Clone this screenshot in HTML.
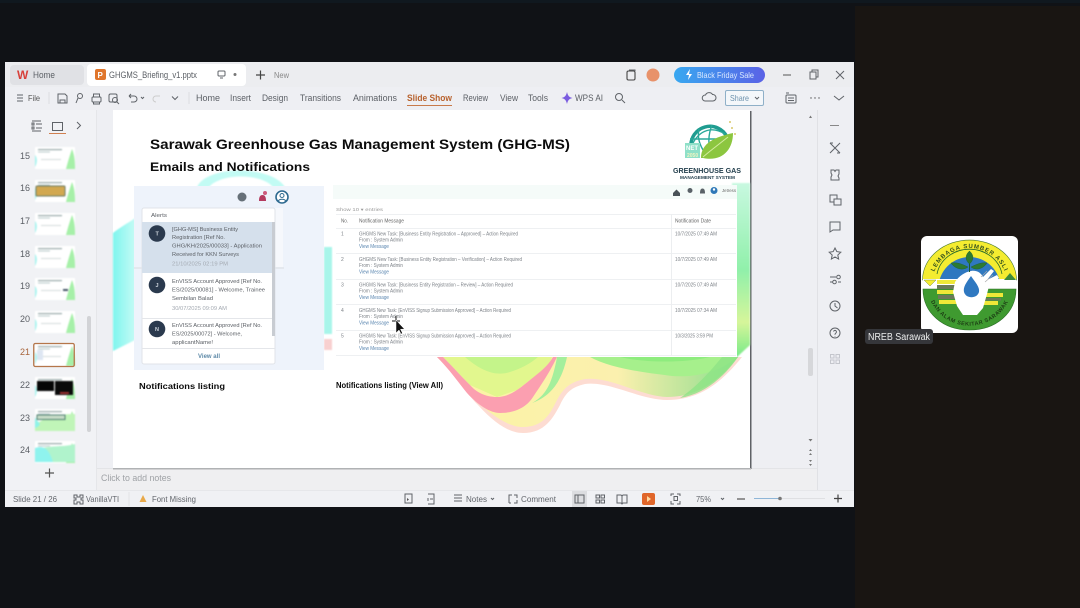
<!DOCTYPE html>
<html><head><meta charset="utf-8"><title>GHGMS Briefing</title>
<style>
html,body{margin:0;padding:0;background:#111418;width:1080px;height:608px;overflow:hidden}
svg{display:block;filter:blur(.3px)}
text{font-family:"Liberation Sans",Arial,sans-serif}
.m{font-size:9px;fill:#5c6066}
.b{filter:blur(.35px)}
.b2{filter:blur(.7px)}
.t{font-size:5px;fill:#7d8288}
.l{fill:#5a86b0}
.i{fill:none;stroke:#5f6368;stroke-width:1}
.a{font-size:5.8px;fill:#5c6066}
</style></head><body>
<svg width="1080" height="608" viewBox="0 0 1080 608" xmlns="http://www.w3.org/2000/svg">
<defs>
<linearGradient id="pill" x1="0" x2="1" y1="0" y2="0"><stop offset="0" stop-color="#38a8f0"/><stop offset="1" stop-color="#5a62e6"/></linearGradient>
<linearGradient id="cy" x1="0" x2="1" y1="0" y2="0"><stop offset="0" stop-color="#7ff5ee"/><stop offset="1" stop-color="#c4fbf5"/></linearGradient>
<linearGradient id="rg" x1="0" x2="0" y1="0" y2="1"><stop offset="0" stop-color="#c8f8e0"/><stop offset=".5" stop-color="#90f0aa"/><stop offset=".8" stop-color="#d6f59a"/><stop offset="1" stop-color="#78ea88"/></linearGradient>
<linearGradient id="sw" x1="0" x2="1" y1="0" y2="0"><stop offset="0" stop-color="#fbf4a4"/><stop offset=".6" stop-color="#fbf0ae"/><stop offset=".85" stop-color="#b8e49a"/><stop offset="1" stop-color="#7fe98a"/></linearGradient>
<symbol id="th" viewBox="0 0 40 22" width="40" height="22"><rect width="40" height="22" fill="#fff"/><path d="M31 22C33 14 35 8 37 2C39 7 40 12 40 22Z" fill="#a6f0a8"/><path d="M0 8C3 11 2 17 0 20Z" fill="#a8f5ef"/><rect x="3" y="2" width="24" height="1.200" fill="#9aa"/><rect x="3" y="4.500" width="12" height="1" fill="#bcc"/><rect x="6" y="12" width="20" height="1" fill="#d4dbdb"/></symbol>
<path id="top" d="M10.500 50A38 38 0 0 1 86.500 50" fill="none"/>
<path id="bot" d="M5.500 46.700A43 43 0 0 0 91.500 46.700" fill="none"/>
<clipPath id="bl"><rect x="0" y="0" width="97" height="43"/></clipPath>
</defs>

<rect width="1080" height="608" fill="#101216"/>
<rect x="855" y="6" width="225" height="602" fill="#191512"/>
<rect x="0" y="0" width="1080" height="3" fill="#10181f"/>

<!-- window -->
<rect x="5" y="62" width="849" height="445" fill="#eeeff3"/>
<rect x="5" y="62" width="849" height="25" fill="#ecedf0"/>
<rect x="10" y="65" width="74" height="20" rx="4" fill="#e0e1e5"/>
<rect x="87" y="64" width="159" height="22" rx="4" fill="#fff"/>
<text x="17" y="79" font-size="12" font-weight="bold" fill="#d8403a">W</text>
<text x="33" y="78" class="m" textLength="22" lengthAdjust="spacingAndGlyphs">Home</text>
<rect x="95" y="69" width="11" height="11" rx="2" fill="#e0762c"/>
<text x="97.500" y="78" font-size="8" font-weight="bold" fill="#fff">P</text>
<text x="109" y="78" class="m" textLength="88" lengthAdjust="spacingAndGlyphs">GHGMS_Briefing_v1.pptx</text>
<rect x="218" y="71" width="7" height="5" rx="1" class="i"/><path d="M220 78h3" class="i"/>
<circle cx="235" cy="74.500" r="1.500" fill="#777"/>
<path d="M256 75h9M260.500 70.500v9" stroke="#444" stroke-width="1.200"/>
<text x="274" y="78" font-size="8" fill="#888" textLength="15" lengthAdjust="spacingAndGlyphs">New</text>
<rect x="627" y="71" width="8" height="9" rx="1.500" fill="none" stroke="#444" stroke-width="1.100"/><path d="M629 70h6v1" class="i"/>
<circle cx="653" cy="75" r="6.500" fill="#e8926a"/>
<rect x="674" y="67" width="91" height="16" rx="8" fill="url(#pill)"/>
<path d="M690 69l-4 6h3l-1 5 4-6h-3z" fill="#fff"/>
<text x="697" y="78" font-size="8.500" fill="#dbe9ff" textLength="57" lengthAdjust="spacingAndGlyphs">Black Friday Sale</text>
<path d="M783 75h8" stroke="#555"/><rect x="810" y="72" width="6" height="7" class="i"/><path d="M812 72v-2h6v7h-2" class="i"/><path d="M836 71l8 8M844 71l-8 8" class="i"/>

<!-- menu -->
<path d="M17 95h6M17 98h6M17 101h6" class="i"/>
<text x="28" y="101" font-size="8.500" fill="#555" textLength="12" lengthAdjust="spacingAndGlyphs">File</text>
<path d="M49 92v12" stroke="#dcdde0"/>
<path d="M58 94h7l2 2v7h-9zM60 103v-3h5v3" class="i"/>
<circle cx="80" cy="96" r="2.500" class="i"/><path d="M78 98l-2 5" class="i"/>
<rect x="92" y="97" width="9" height="5" rx="1" class="i"/><path d="M93.500 97v-3h6v3M93.500 102v2h6v-2" class="i"/>
<rect x="109" y="94" width="8" height="8" rx="1.500" class="i"/><circle cx="115" cy="100" r="2.500" class="i"/><path d="M117 102l2 2" class="i"/>
<path d="M129 96h5a2.500 2.500 0 0 1 0 6h-3M129 96l2-2M129 96l2 2" class="i"/><path d="M141 97l1.500 1.500 1.500-1.500" class="i"/>
<path d="M160 96h-4a2.500 2.500 0 0 0 0 6" fill="none" stroke="#ccc"/>
<path d="M172 96.500l3 3 3-3" class="i"/>
<path d="M189 92v12" stroke="#dcdde0"/>
<g class="m">
<text x="196" y="101" textLength="24" lengthAdjust="spacingAndGlyphs">Home</text>
<text x="230" y="101" textLength="21" lengthAdjust="spacingAndGlyphs">Insert</text>
<text x="262" y="101" textLength="26" lengthAdjust="spacingAndGlyphs">Design</text>
<text x="300" y="101" textLength="41" lengthAdjust="spacingAndGlyphs">Transitions</text>
<text x="353" y="101" textLength="44" lengthAdjust="spacingAndGlyphs">Animations</text>
<text x="463" y="101" textLength="25" lengthAdjust="spacingAndGlyphs">Review</text>
<text x="500" y="101" textLength="18" lengthAdjust="spacingAndGlyphs">View</text>
<text x="528" y="101" textLength="20" lengthAdjust="spacingAndGlyphs">Tools</text>
<text x="575" y="101" textLength="28" lengthAdjust="spacingAndGlyphs">WPS AI</text>
</g>
<text x="407" y="101" font-size="9" font-weight="bold" fill="#b8622e" textLength="45" lengthAdjust="spacingAndGlyphs">Slide Show</text>
<rect x="407" y="105" width="45" height="1" fill="#c87a4a"/>
<path d="M567 92c1 4 2 5 5.500 6c-3.500 1-4.500 2-5.500 6c-1-4-2-5-5.500-6c3.500-1 4.500-2 5.500-6z" fill="#7a5ce0"/>
<circle cx="619" cy="97" r="3.500" class="i"/><path d="M622 100l3 3" class="i"/>
<path d="M705 101a3 3 0 0 1 .5-6a4 4 0 0 1 7-.5a3 3 0 0 1 .5 6.500z" class="i"/>
<rect x="725.500" y="90.500" width="38" height="15" rx="1.500" fill="#f4f7fa" stroke="#8fb0c8"/>
<text x="730" y="101" font-size="8.500" fill="#6d92ad" textLength="19" lengthAdjust="spacingAndGlyphs">Share</text>
<path d="M755 97l2 2 2-2" class="i"/>
<rect x="786" y="95" width="10" height="8" rx="1" class="i"/><path d="M786 93h3M788 98h6M788 100.500h6" class="i"/>
<circle cx="811" cy="98" r=".7" fill="#555"/><circle cx="815" cy="98" r=".7" fill="#555"/><circle cx="819" cy="98" r=".7" fill="#555"/>
<path d="M834 96l5 4 5-4" class="i"/>

<!-- panes -->
<rect x="5" y="110" width="91" height="381" fill="#f1f2f5"/>
<path d="M96.500 110v381" stroke="#e5e6e9"/>
<path d="M97 468.500H818" stroke="#e3e4e7"/>
<rect x="97" y="469" width="720" height="22" fill="#efeff1"/>
<path d="M817.500 110v381" stroke="#e0e1e5"/>
<rect x="5" y="491" width="849" height="16" fill="#f0f1f4"/>
<path d="M5 490.500H854" stroke="#e6e7ea"/>
<text x="101" y="481" font-size="9" fill="#9fa2a6" textLength="70" lengthAdjust="spacingAndGlyphs">Click to add notes</text>

<path d="M32 123h2v2h-2zM32 127h2v2h-2zM36 124h6M36 128h6M32 121h9M32 131h9" class="i"/>
<rect x="52.500" y="122.500" width="10" height="8" class="i"/>
<rect x="49" y="133" width="17" height="1" fill="#d08050"/>
<path d="M77 122l3.500 3.500-3.500 3.500" class="i"/>

<g font-size="9" fill="#5a5e64">
<text x="20" y="159">15</text><text x="20" y="191">16</text><text x="20" y="224">17</text><text x="20" y="257">18</text><text x="20" y="289">19</text><text x="20" y="322">20</text><text x="20" y="355" fill="#a8653c">21</text><text x="20" y="388">22</text><text x="20" y="421">23</text><text x="20" y="453">24</text>
</g>
<g class="b2">
<use href="#th" x="35" y="147"/>
<use href="#th" x="35" y="180"/><rect x="36" y="186" width="29" height="10" rx="1" fill="#d2a850" stroke="#6a7a60"/>
<use href="#th" x="35" y="213"/>
<use href="#th" x="35" y="246"/>
<use href="#th" x="35" y="278"/><rect x="63" y="289" width="5" height="2" fill="#456"/>
<use href="#th" x="35" y="311"/>
<use href="#th" x="35" y="344"/><rect x="37" y="350" width="6" height="10" fill="#dde6f2"/>
<use href="#th" x="35" y="377"/><rect x="37" y="381" width="17" height="10" fill="#050505"/><rect x="55" y="381" width="18" height="14" fill="#0a0a0a"/><rect x="60" y="392" width="9" height="2" fill="#a03030"/>
<use href="#th" x="35" y="409"/><path d="M35 426c8-10 28-12 40-12v17H35z" fill="#c0f5b8"/><path d="M35 419c4 3 8 6 0 9z" fill="#8ff3e8"/><rect x="37" y="415" width="28" height="4.500" fill="#c8dcc8" stroke="#4f8070"/>
<use href="#th" x="35" y="441"/><path d="M35 452c8-8 28-4 40-8v18H35z" fill="#b0f3cc"/><path d="M35 448c10-3 14 2 18 14H35z" fill="#8ff3ee"/>
</g>
<rect x="33.750" y="343.500" width="40.500" height="23" rx="1.500" fill="none" stroke="#b5764a" stroke-width="1.300"/>
<rect x="87" y="316" width="4" height="116" rx="2" fill="#d2d3d6"/>
<path d="M45 473h9M49.500 468.500v9" stroke="#555" stroke-width="1.200"/>

<!-- slide -->
<rect x="113" y="110" width="637" height="358" fill="#fff"/>
<rect x="750" y="111" width="1.500" height="358" fill="#5f6266"/>
<rect x="113" y="468" width="638" height="1.500" fill="#b0b2b4"/>
<path class="b2" d="M113 233C122 226 130 222 135 218V340L113 351Z" fill="url(#cy)"/>
<path class="b2" d="M197 187c10-22 74-22 88 0h-12c-12-14-52-14-64 0z" fill="#c2fbf4"/>
<rect class="b2" x="324" y="247" width="8" height="87" fill="#a8f5ea"/><rect class="b2" x="324" y="339" width="8" height="11" fill="#f8d0d0"/>
<path class="b2" d="M732 183H750V345L737 357H732Z" fill="url(#rg)"/>

<g class="b">
<path d="M437 357C455 375 465 392 478 405C495 424 510 433 523 433C545 433 553 418 560 405C566 392 572 387 585 384C610 381 640 400 667 400C700 400 722 382 742 357Z" fill="#fddcd2"/>
<path d="M437 357C455 375 465 390 478 402C495 418 510 427 523 427C543 427 550 414 556 402C563 388 570 382 585 379C610 376 640 396 667 397C698 397 720 380 738 357Z" fill="url(#sw)"/>
<path d="M590 357C610 368 640 372 672 376C700 378 722 370 737 357Z" fill="#a6f08c"/>
<path d="M620 357C640 362 680 364 710 357Z" fill="#8eec7e"/>
<path d="M680 398C705 394 725 376 738 357L722 357C710 372 695 388 680 398Z" fill="#8fe486" opacity=".8"/>
<path d="M443 357H552L547 370L530 380L517 390L497 397L470 385Z" fill="#e2f78e"/>
<path d="M465 357C480 370 495 377 510 372C520 369 530 364 538 357Z" fill="#c4f48a"/>
<path d="M437 357C450 370 458 382 467 393C478 405 490 413 500 413C514 413 526 408 533 397C541 385 550 372 557 357L553 357C548 366 540 372 530 380C520 388 510 397 497 397C485 397 476 392 470 385C460 375 452 366 443 357Z" fill="#fb9fb0"/>
<path d="M532 403C545 396 552 385 557 357H567C562 380 552 396 532 403Z" fill="#a4ef9c"/>
</g>

<text x="150" y="149" font-size="13.500" font-weight="bold" fill="#0c0c0c" textLength="420" lengthAdjust="spacingAndGlyphs">Sarawak Greenhouse Gas Management System (GHG-MS)</text>
<text x="150" y="171" font-size="12" font-weight="bold" fill="#0c0c0c" textLength="160" lengthAdjust="spacingAndGlyphs">Emails and Notifications</text>

<!-- GHG logo -->
<g class="b">
<path d="M691 147A19 19 0 0 1 727 137" fill="none" stroke="#1f9c90" stroke-width="3.500"/>
<path d="M693 143C700 130 712 126 725 134M699 129C697 138 700 146 705 153M712 125C708 135 708 145 711 152M690 139H721" fill="none" stroke="#2aa89a" stroke-width="1.400"/>
<rect x="685" y="143" width="15" height="15" fill="#8fe0c8"/>
<text x="686" y="150" font-size="6" font-weight="bold" fill="#fff">NET</text>
<text x="687" y="157" font-size="5" font-weight="bold" fill="#f0f4c0">2050</text>
<path d="M701 158C701 143 715 137 733 133C733 150 722 162 703 158Z" fill="#8cc63f"/>
<path d="M703 157C711 150 718 145 728 137" stroke="#d4eca0" fill="none"/>
<circle cx="732" cy="128" r="1" fill="#d8c86a"/><circle cx="730" cy="122" r="1" fill="#d8c86a"/><circle cx="735" cy="134" r="1" fill="#d8c86a"/>
<text x="673" y="173" font-size="7.500" font-weight="bold" fill="#24404e" textLength="68" lengthAdjust="spacingAndGlyphs">GREENHOUSE GAS</text>
<text x="680" y="179" font-size="4.500" font-weight="bold" fill="#24404e" textLength="55" lengthAdjust="spacingAndGlyphs">MANAGEMENT SYSTEM</text>
</g>

<!-- left panel -->
<g class="b">
<rect x="134" y="186" width="190" height="184" fill="#eef3fb"/>
<rect x="275" y="208" width="8" height="60" fill="#f6f8fc"/>
<rect x="134" y="267" width="150" height="2" fill="#e4e8ee"/>
<circle cx="242" cy="197" r="4.500" fill="#667078"/>
<path d="M259 201c0-3 .5-6 3.500-6s3.500 3 3.500 6z" fill="#b43a5e"/><circle cx="265" cy="193" r="2" fill="#cc5a7c"/>
<circle cx="282" cy="197" r="6" fill="#fff" stroke="#2e6a90" stroke-width="1.600"/><circle cx="282" cy="195.500" r="2" fill="none" stroke="#2e6a90"/><path d="M278 201.500c1-3 7-3 8 0" fill="none" stroke="#2e6a90"/>
<rect x="142" y="208" width="133" height="156" rx="2" fill="#fff" stroke="#e0e3e8"/>
<text x="151" y="217" class="a" textLength="16" lengthAdjust="spacingAndGlyphs">Alerts</text>
<rect x="142" y="222" width="130" height="51" fill="#d5e0ec"/>
<rect x="272" y="222" width="3" height="114" fill="#c8ccd2"/>
<path d="M142 318.500h130M142 348.500h133" stroke="#e4e6ea"/>
<g fill="#2b3a4e"><circle cx="157" cy="233.500" r="8.300"/><circle cx="157" cy="285" r="8.300"/><circle cx="157" cy="329" r="8.300"/></g>
<g font-size="5.500" font-weight="bold" fill="#cfd6de"><text x="155.500" y="235.500">T</text><text x="155.500" y="287">J</text><text x="155" y="331">N</text></g>
<g class="a">
<text x="172" y="231" textLength="66" lengthAdjust="spacingAndGlyphs">[GHG-MS] Business Entity</text>
<text x="172" y="239" textLength="53" lengthAdjust="spacingAndGlyphs">Registration [Ref No.</text>
<text x="172" y="247.500" textLength="90" lengthAdjust="spacingAndGlyphs">GHG/KH/2025/00033] - Application</text>
<text x="172" y="256" textLength="67" lengthAdjust="spacingAndGlyphs">Received for KKN Surveys</text>
<text x="172" y="283" textLength="90" lengthAdjust="spacingAndGlyphs">EnVISS Account Approved [Ref No.</text>
<text x="172" y="291.500" textLength="93" lengthAdjust="spacingAndGlyphs">ES/2025/00081] - Welcome, Trainee</text>
<text x="172" y="300" textLength="41" lengthAdjust="spacingAndGlyphs">Sembilan Balad</text>
<text x="172" y="327" textLength="90" lengthAdjust="spacingAndGlyphs">EnVISS Account Approved [Ref No.</text>
<text x="172" y="335.500" textLength="70" lengthAdjust="spacingAndGlyphs">ES/2025/00072] - Welcome,</text>
<text x="172" y="344" textLength="41" lengthAdjust="spacingAndGlyphs">applicantName!</text>
</g>
<g font-size="5.500" fill="#a4aab2"><text x="172" y="265.500" textLength="56" lengthAdjust="spacingAndGlyphs">21/10/2025 02:19 PM</text><text x="172" y="310" textLength="55" lengthAdjust="spacingAndGlyphs">30/07/2025 09:09 AM</text></g>
<text x="198" y="358" font-size="6.500" font-weight="bold" fill="#5e8aa8" textLength="22" lengthAdjust="spacingAndGlyphs">View all</text>
</g>
<text x="139" y="389" font-size="8.500" font-weight="bold" fill="#0c0c0c" textLength="86" lengthAdjust="spacingAndGlyphs">Notifications listing</text>
<text x="336" y="388" font-size="8.500" font-weight="bold" fill="#0c0c0c" textLength="107" lengthAdjust="spacingAndGlyphs">Notifications listing (View All)</text>

<!-- right panel -->
<g class="b">
<rect x="333" y="185" width="404" height="172" fill="#fff"/>
<rect x="333" y="185" width="404" height="14" fill="#f5fbf9"/>
<path d="M673 193l3.500-3.500 3.500 3.500v3h-7z" fill="#4a5258"/><circle cx="690" cy="190.500" r="2.500" fill="#5a6268"/><path d="M700 193.500c0-3 .5-5 2.500-5s2.500 2 2.500 5z" fill="#5a6268"/><circle cx="714" cy="190.500" r="3.500" fill="#2f78b8"/><circle cx="714" cy="189.500" r="1.200" fill="#fff"/>
<text x="722" y="192" font-size="4.500" fill="#666" textLength="14" lengthAdjust="spacingAndGlyphs">Jetress</text>
<text x="336" y="211" font-size="4.500" fill="#999" textLength="47" lengthAdjust="spacingAndGlyphs">Show  10  ▾  entries</text>
<path d="M336 214.500H736M336 228.500H736M336 253.500H736M336 279.500H736M336 304.500H736M336 330.500H736M336 355.500H736" stroke="#eef0f2"/>
<path d="M671.500 214v142" stroke="#eceef0"/>
<g class="t">
<text x="341" y="222.500" fill="#666" textLength="7" lengthAdjust="spacingAndGlyphs">No.</text>
<text x="359" y="222.500" fill="#666" textLength="45" lengthAdjust="spacingAndGlyphs">Notification Message</text>
<text x="675" y="222.500" fill="#666" textLength="36" lengthAdjust="spacingAndGlyphs">Notification Date</text>
</g>
<g class="t">
<text x="341" y="235.500">1</text>
<text x="359" y="235.500" textLength="159" lengthAdjust="spacingAndGlyphs">GHGMS New Task: [Business Entity Registration – Approved] – Action Required</text>
<text x="359" y="241.500" textLength="44" lengthAdjust="spacingAndGlyphs">From : System Admin</text>
<text x="359" y="248" class="t l" textLength="30" lengthAdjust="spacingAndGlyphs">View Message</text>
<text x="675" y="235.500" textLength="42" lengthAdjust="spacingAndGlyphs">10/7/2025 07:49 AM</text>
<text x="341" y="261">2</text>
<text x="359" y="261" textLength="163" lengthAdjust="spacingAndGlyphs">GHGMS New Task: [Business Entity Registration – Verification] – Action Required</text>
<text x="359" y="267" textLength="44" lengthAdjust="spacingAndGlyphs">From : System Admin</text>
<text x="359" y="273.500" class="t l" textLength="30" lengthAdjust="spacingAndGlyphs">View Message</text>
<text x="675" y="261" textLength="42" lengthAdjust="spacingAndGlyphs">10/7/2025 07:49 AM</text>
<text x="341" y="286.500">3</text>
<text x="359" y="286.500" textLength="154" lengthAdjust="spacingAndGlyphs">GHGMS New Task: [Business Entity Registration – Review] – Action Required</text>
<text x="359" y="292.500" textLength="44" lengthAdjust="spacingAndGlyphs">From : System Admin</text>
<text x="359" y="299" class="t l" textLength="30" lengthAdjust="spacingAndGlyphs">View Message</text>
<text x="675" y="286.500" textLength="42" lengthAdjust="spacingAndGlyphs">10/7/2025 07:49 AM</text>
<text x="341" y="312">4</text>
<text x="359" y="312" textLength="152" lengthAdjust="spacingAndGlyphs">GHGMS New Task: [EnVISS Signup Submission Approved] – Action Required</text>
<text x="359" y="318" textLength="44" lengthAdjust="spacingAndGlyphs">From : System Admin</text>
<text x="359" y="324.500" class="t l" textLength="30" lengthAdjust="spacingAndGlyphs">View Message</text>
<text x="675" y="312" textLength="42" lengthAdjust="spacingAndGlyphs">10/7/2025 07:34 AM</text>
<text x="341" y="337.500">5</text>
<text x="359" y="337.500" textLength="152" lengthAdjust="spacingAndGlyphs">GHGMS New Task: [EnVISS Signup Submission Approved] – Action Required</text>
<text x="359" y="343.500" textLength="44" lengthAdjust="spacingAndGlyphs">From : System Admin</text>
<text x="359" y="350" class="t l" textLength="30" lengthAdjust="spacingAndGlyphs">View Message</text>
<text x="675" y="337.500" textLength="38" lengthAdjust="spacingAndGlyphs">10/3/2025 3:59 PM</text>
</g>
</g>
<!-- cursor -->
<path d="M392 321h8M396 316v5" stroke="#111" stroke-width="1"/>
<path d="M396 320v13l3-3 2 4 1.500-.8-2-4h4z" fill="#111" stroke="#fff" stroke-width=".5"/>

<!-- right rail -->
<path d="M830 125.500h9" stroke="#888"/>
<g class="i">
<path d="M830 143l10 10M840 143l-10 10M830 143l3 0M840 153l-3 0"/>
<path d="M831 170h3l1 1.500 1-1.500h3v4l-1 2 1 2v2h-8v-3l1-2-1-2z"/>
<rect x="830" y="195" width="7" height="7"/><rect x="834" y="199" width="7" height="6" fill="#eeeff3"/>
<path d="M830 222h10v8h-7l-3 2z"/>
<path d="M835 248l1.800 3.600 4 .6-3 2.800.8 4-3.600-2-3.600 2 .8-4-3-2.800 4-.6z"/>
<path d="M830 277h6M838 282h3M830 282h3"/><circle cx="838.500" cy="277" r="1.800"/><circle cx="834.500" cy="282" r="1.800"/>
<circle cx="835" cy="306" r="5"/><path d="M835 303v3l2.500 2"/>
<circle cx="835" cy="333" r="5"/><path d="M833.500 331.500a1.500 1.500 0 1 1 2 1.800l-.5 1v.5M835 336v.5"/>
</g>
<g fill="none" stroke="#c4c6cc"><rect x="830.500" y="354.500" width="3.500" height="3.500"/><rect x="836" y="354.500" width="3.500" height="3.500"/><rect x="830.500" y="360" width="3.500" height="3.500"/><rect x="836" y="360" width="3.500" height="3.500"/></g>
<path d="M809 118l1.500-2.500 1.500 2.500z" fill="#777"/>
<rect x="808" y="348" width="5" height="28" rx="2" fill="#d6d7da"/>
<path d="M808.500 439l2 2.500 2-2.500z" fill="#777"/>
<path d="M809 451l1.500-2 1.500 2zM809 455l1.500-2 1.500 2zM809 460l1.500 2 1.500-2zM809 464l1.500 2 1.500-2z" fill="#777"/>

<!-- status -->
<g font-size="8.500" fill="#62666c">
<text x="13" y="502" textLength="44" lengthAdjust="spacingAndGlyphs">Slide 21 / 26</text>
<text x="86" y="502" textLength="33" lengthAdjust="spacingAndGlyphs">VanillaVTI</text>
<text x="152" y="502" textLength="44" lengthAdjust="spacingAndGlyphs">Font Missing</text>
<text x="466" y="502" textLength="21" lengthAdjust="spacingAndGlyphs">Notes</text>
<text x="521" y="502" textLength="35" lengthAdjust="spacingAndGlyphs">Comment</text>
<text x="696" y="502" textLength="15" lengthAdjust="spacingAndGlyphs">75%</text>
</g>
<path d="M74 495h3v2h3v-2h3v3h-2v2h2v4h-3v-2h-3v2h-3v-4h2v-2h-2z" class="i"/>
<path d="M129 492v14" stroke="#e2e3e6"/>
<path d="M143 495l3.500 7h-7z" fill="#e8a94a"/>
<rect x="405" y="494" width="7" height="9" class="i"/><path d="M407 498l2 1.500-2 1.500z" fill="#555"/>
<path d="M428 494h6v10h-6M430 499h3" class="i"/><path d="M428 498v3" class="i"/>
<path d="M454 495h8M454 498h8M454 501h8" class="i"/><path d="M491 498l1.500 1.500 1.500-1.500" class="i"/>
<path d="M509 503v-8h3M514 495h3v3M517 500v3h-3M511 503h-2" class="i"/>
<rect x="572" y="491" width="15" height="16" fill="#dcdde0"/>
<rect x="575" y="495" width="9" height="8" class="i"/><path d="M578 495v8" class="i"/>
<rect x="596" y="495" width="3.500" height="3" class="i"/><rect x="601" y="495" width="3.500" height="3" class="i"/><rect x="596" y="500" width="3.500" height="3" class="i"/><rect x="601" y="500" width="3.500" height="3" class="i"/>
<path d="M617 495h4l1 1 1-1h4v8h-4l-1 1-1-1h-4zM622 496v7" class="i"/>
<rect x="642" y="493" width="13" height="12" rx="2" fill="#e0662a"/><path d="M647 496l4 3-4 3z" fill="#ffd9a0"/>
<path d="M671 496v-2h3M677 494h3v2M680 501v3h-3M674 504h-3v-3" class="i"/><rect x="674" y="496.500" width="3.500" height="4" class="i"/>
<path d="M721 498l1.500 1.500 1.500-1.500" class="i"/>
<path d="M737 499h8" stroke="#555" stroke-width="1.200"/>
<path d="M754 498.500h71" stroke="#dfe0e3"/><path d="M754 498.500h26" stroke="#8fb6d8"/><circle cx="780" cy="498.500" r="1.800" fill="#777"/>
<path d="M834 498.500h8M838 494.500v8" stroke="#444" stroke-width="1.200"/>

<!-- emblem -->
<g transform="translate(921 236)">
<rect width="97" height="97" rx="6" fill="#fff"/>
<path d="M1.500 44A47 40 0 0 1 95.500 44Z" fill="#f4ec30" stroke="#4a7a30" stroke-width=".6"/>
<circle cx="48.500" cy="52" r="31" fill="#2f78c0" clip-path="url(#bl)"/>
<path d="M16 38A33 30 0 0 1 81 38" fill="none" stroke="#2a6b2a" stroke-width=".8"/>
<rect x="2" y="43" width="93" height="10" fill="#fff"/>
<path d="M3 44h12l-6 6z" fill="#f4ec30" stroke="#5a7a30" stroke-width=".4"/>
<path d="M83 44h12l-6-7z" fill="#3c8a3c"/>
<path d="M2 53H95C95 77 75 94 48.500 94C22 94 2 77 2 53Z" fill="#3f9a30" stroke="#2a6f25" stroke-width=".6"/>
<g fill="#efe838"><rect x="16" y="44" width="21" height="4"/><rect x="16" y="54" width="21" height="4"/><rect x="18" y="64" width="20" height="4"/><rect x="59" y="57" width="23" height="4"/><rect x="59" y="65" width="18" height="4"/></g>
<g fill="#6b7a5a"><rect x="16" y="49" width="21" height="4"/><rect x="17" y="59" width="21" height="4"/><rect x="59" y="62" width="21" height="2.500"/></g>
<path d="M34 46C38 40 44 36 50 35C56 34 60 37 62 41L70 33L73 35L66 44L76 39L78 42L68 50L66 58L62 72L56 79L42 79L36 70L32 56Z" fill="#fff"/>
<path d="M60 41L66 35M64 46L72 39" stroke="#aaa" stroke-width=".7"/>
<path d="M50 40C45 47 42 51 43 56C45 63 56 63 58 56C59 51 54 46 50 40Z" fill="#2f78c0"/>
<path d="M48.500 36V26" stroke="#1f5c28"/>
<path d="M48.500 28C43 23 45 18 48.500 15C52 18 54 23 48.500 28ZM47 31C41 28 36 26 30 27C34 33 42 35 47 31ZM50 31C56 28 61 26 66 27C62 33 55 35 50 31Z" fill="#2c7a32" stroke="#1f5c28" stroke-width=".4"/>
<text font-size="6" font-weight="bold" fill="#33501e" letter-spacing=".9" text-anchor="middle"><textPath href="#top" startOffset="50%">LEMBAGA SUMBER ASLI</textPath></text>
<text font-size="5.500" font-weight="bold" fill="#1c3d14" letter-spacing=".5" text-anchor="middle"><textPath href="#bot" startOffset="50%">DAN ALAM SEKITAR SARAWAK</textPath></text>
</g>
<rect x="865" y="329" width="68" height="15" rx="3" fill="#35363a"/>
<text x="868" y="340" font-size="10" fill="#eceded" textLength="62" lengthAdjust="spacingAndGlyphs">NREB Sarawak</text>
</svg>
</body></html>
